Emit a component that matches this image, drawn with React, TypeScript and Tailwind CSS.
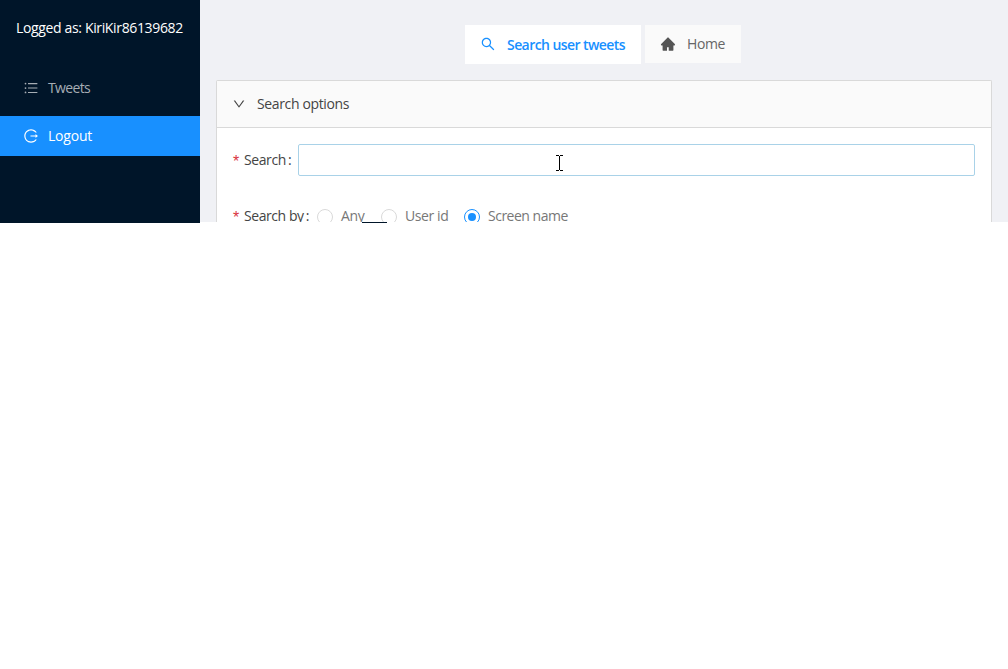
import type { ReactNode } from 'react';
import {
  AiFillHome,
  AiOutlineDown,
  AiOutlineLogout,
  AiOutlineSearch,
  AiOutlineUnorderedList,
} from 'react-icons/ai';

function Sidebar() {
  return (
    <aside className="h-[223px] w-[200px] shrink-0 bg-[#001529]">
      <div className="h-[68px] pt-[17px] pl-4 text-[14px] leading-[22px] tracking-[-0.35px] whitespace-nowrap text-white">
        Logged as: KiriKir86139682
      </div>
      <nav className="flex flex-col gap-2">
        <a className="flex h-10 items-center gap-[9px] pl-[23px] text-[#a6adb4]">
          <AiOutlineUnorderedList size={16} />
          <span className="mb-[2px] tracking-[-0.65px]">Tweets</span>
        </a>
        <a className="flex h-10 items-center gap-[9px] bg-[#1890ff] pl-[23px] text-white">
          <AiOutlineLogout size={16} />
          <span className="mb-[2px] tracking-[-0.2px]">Logout</span>
        </a>
      </nav>
    </aside>
  );
}

function Label({ children }: { children: ReactNode }) {
  return (
    <label className="flex shrink-0 leading-[22px] whitespace-nowrap text-[#444]">
      <span className="w-[11px] pt-[2px] font-['Liberation_Sans',sans-serif] text-[16px] text-[#d9363e]">*</span>
      {children}
    </label>
  );
}

function Radio({ checked = false }: { checked?: boolean }) {
  return (
    <span
      className={`mt-1 flex h-4 w-4 shrink-0 items-center justify-center rounded-full border bg-white ${
        checked ? 'border-[#1890ff]' : 'border-[#d9d9d9]'
      }`}
    >
      {checked && <span className="h-2 w-2 rounded-full bg-[#1890ff]" />}
    </span>
  );
}

function Cursor() {
  return (
    <svg className="absolute top-[10px] left-[257px]" width="7" height="16" shapeRendering="crispEdges">
      <path d="M0 0h3v1H0zM4 0h3v1H4zM3 1h1v14H3zM0 15h3v1H0zM4 15h3v1H4z" fill="#000" />
    </svg>
  );
}

export default function App() {
  return (
    <div className="h-[669px] w-[1008px] overflow-hidden bg-white font-['Open_Sans','Noto_Sans',sans-serif] text-[14px]">
      <div className="flex h-[223px]">
        <Sidebar />
        <main className="h-[222px] w-[808px] bg-[#f0f1f5] px-4 pt-[25px]">
          <div className="flex h-[55px] gap-1 pl-[249px] leading-[38px]">
            <button className="flex h-[39px] w-[176px] items-center bg-white pl-[15px] font-semibold whitespace-nowrap text-[#1890ff]">
              <AiOutlineSearch size={16} className="mr-[11px] mb-px shrink-0" />
              <span className="tracking-[-0.57px]">Search user tweets</span>
            </button>
            <button className="flex h-[38px] w-24 items-center bg-[#fafafa] pl-[15px] text-[#666]">
              <AiFillHome size={16} className="mr-[11px] shrink-0 text-[#555]" />
              <span className="tracking-[-0.4px]">Home</span>
            </button>
          </div>
          <section className="h-[142px] overflow-hidden rounded-t-[2px] border border-b-0 border-[#d9d9d9] bg-white">
            <header className="flex h-[47px] items-center border-b border-[#d9d9d9] bg-[#fafafa] pl-[15px] text-[#444]">
              <AiOutlineDown size={14} className="mr-[11px]" />
              <span className="mb-[2px] tracking-[-0.37px]">Search options</span>
            </header>
            <div className="flex h-[77px] px-4 pt-4">
              <div className="flex w-[65px] shrink-0 pt-[5px]">
                <Label>
                  <span className="tracking-[-0.4px]">Search</span>
                  <span className="ml-[2px]">:</span>
                </Label>
              </div>
              <div className="relative h-8 w-[677px] shrink-0 rounded-[2px] border border-[#a9d2e8] bg-white">
                <Cursor />
              </div>
            </div>
            <div className="flex h-[22px] pl-4 leading-[22px] text-[#777]">
              <div className="w-[84px] shrink-0">
                <Label>
                  <span className="tracking-[-0.43px]">Search by</span>
                  <span className="ml-[2px]">:</span>
                </Label>
              </div>
              <div className="flex w-16">
                <Radio />
                <span className="ml-2 tracking-[-0.3px]">Any</span>
              </div>
              <div className="flex w-[83px]">
                <Radio />
                <span className="ml-2 tracking-[-0.4px] whitespace-nowrap">User id</span>
              </div>
              <div className="flex">
                <Radio checked />
                <span className="ml-2 tracking-[-0.5px] whitespace-nowrap">Screen name</span>
              </div>
            </div>
          </section>
          <div className="ml-[146px] h-px w-[25px] bg-[#001529]" />
        </main>
      </div>
    </div>
  );
}
